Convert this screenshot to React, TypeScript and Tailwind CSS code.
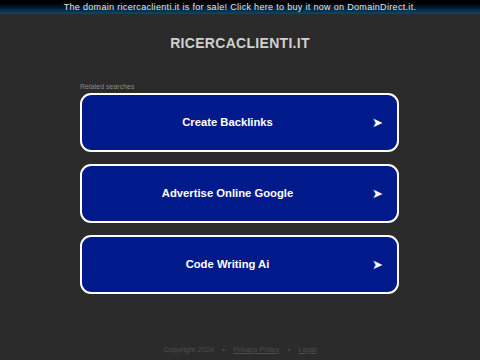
import React from "react";

const searches = ["Create Backlinks", "Advertise Online Google", "Code Writing Ai"];

export default function App() {
    return (
        <div className="w-[480px] h-[360px] bg-[#2b2b2b] flex flex-col overflow-hidden font-['Liberation_Sans',Arial,sans-serif]">
            {/* sale banner */}
            <div className="h-[14px] bg-gradient-to-b from-[#000000] to-[#0b4a6e] flex items-center justify-center">
                <span className="text-[9px] leading-none text-[#e6e6e6] tracking-[0.32px]">
                    The domain ricercaclienti.it is for sale! Click here to buy it now on DomainDirect.it.
                </span>
            </div>

            <h1 className="mt-[22px] text-center text-[14px] leading-none font-bold text-[#d0d0d0] tracking-[0.3px]">
                RICERCACLIENTI.IT
            </h1>

            <div className="mt-[33px] ml-[80px] mr-[81px] flex flex-col">
                <span className="text-[7px] leading-none text-[#8a8a8a]">Related searches</span>
                <div className="mt-[3px] flex flex-col gap-[12px]">
                    {searches.map((s) => (
                        <div
                            key={s}
                            className="h-[59px] rounded-[11px] border-2 border-white bg-[#001a8c] flex items-center pr-[24px] relative"
                        >
                            <span className="flex-1 text-center text-[11.25px] font-bold text-white">{s}</span>
                            <span className="absolute right-[14px] text-[13px] text-white leading-none">➤</span>
                        </div>
                    ))}
                </div>
            </div>

            <div className="mt-auto mb-[7px] flex justify-center items-center gap-[8px] text-[7.5px] leading-none text-[#4e4e4e]">
                <span>Copyright 2024</span>
                <span>•</span>
                <span className="underline">Privacy Policy</span>
                <span>•</span>
                <span className="underline">Legal</span>
            </div>
        </div>
    );
}
